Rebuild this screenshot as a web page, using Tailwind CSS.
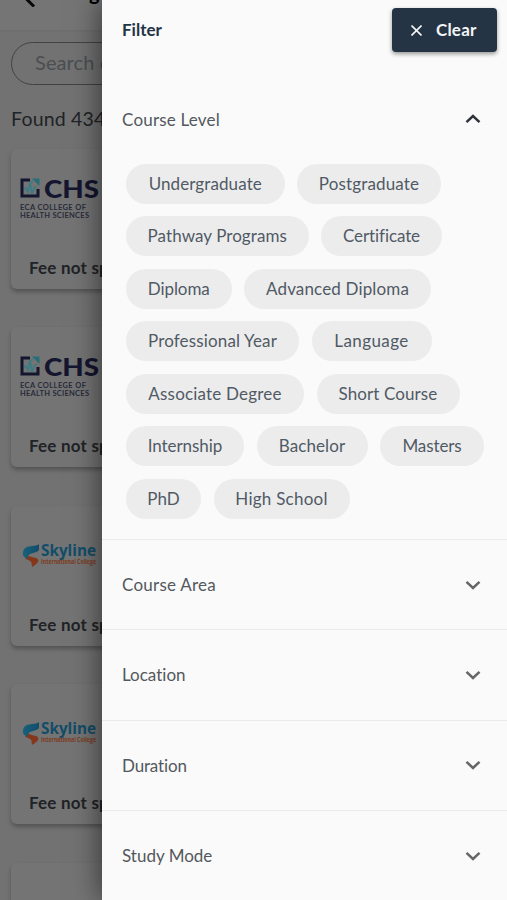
<!DOCTYPE html>
<html lang="en">
<head>
<meta charset="utf-8">
<title>Filter</title>
<script src="https://cdn.jsdelivr.net/npm/@tailwindcss/browser@4"></script>
</head>
<body class="h-[900px] w-[507px] overflow-hidden bg-[#757575] font-['Lato','Noto_Sans',sans-serif] [font-variant-ligatures:none]">
<svg class="absolute h-0 w-0">
  <defs><linearGradient id="sky" x1="0" x2="1"><stop stop-color="#17627b"/><stop offset="1" stop-color="#124c6a"/></linearGradient></defs>
  <symbol id="down" viewBox="0 0 16 10"><path d="M1.500 1.800 8 8l6.500-6.200" fill="none" stroke="currentColor" stroke-width="2.500"/></symbol>
  <symbol id="chs" viewBox="0 0 82 44">
    <path d="M10 2H2v16h16v-7" fill="none" stroke="#14152f" stroke-width="3"/>
    <path d="M12 .5h7.500V8z" fill="#286e78"/>
    <path d="m4 11 2-1 2 4 2-9 2 11 2-6 3-2M9 6l4-3" fill="none" stroke="#357d86" stroke-width="1.500"/>
    <text x="24" y="20" font-family="Lato" font-size="25" font-weight="900" textLength="55" lengthAdjust="spacingAndGlyphs" fill="#14152f">CHS</text>
    <text x="0" y="31.500" font-family="Lato" font-size="7.500" font-weight="700" textLength="66" fill="#292b3b">ECA COLLEGE OF</text>
    <text x="0" y="40" font-family="Lato" font-size="7.500" font-weight="700" textLength="69" fill="#292b3b">HEALTH SCIENCES</text>
  </symbol>
  <symbol id="skyline" viewBox="0 0 76 26">
    <path d="M6 12c2 2.500 7 2 9 3.500 3 2 1 5-5 8.500l-.5-4C10 18 5 17 3 15.500Z" fill="#85371b"/>
    <path d="M17 1v6c-2 3-8 2.500-11 5.500-1 1-.5 2 1 3.500C3 15 0 13 1 9c1-5 5-5.500 9-6 3-.3 5-.5 7-2Z" fill="url(#sky)"/>
    <text x="19" y="13" font-family="Open Sans" font-size="16" font-weight="700" textLength="55" lengthAdjust="spacingAndGlyphs" fill="#124d69">Skyline</text>
    <text x="19" y="21" font-family="Open Sans" font-size="6.500" font-weight="700" textLength="55" lengthAdjust="spacingAndGlyphs" fill="#7c3b20">International College</text>
  </symbol>
</svg>

<div class="relative h-[900px]">
  <main class="h-[900px] w-[102px] overflow-hidden bg-[#727272] text-[#202327]">
    <header class="flex h-[30px] overflow-hidden bg-[#757575] shadow-[0_1px_3px_#0001]">
      <svg class="mt-[-13px] ml-[24px] h-[20px] w-[14px] shrink-0" viewBox="0 0 14 20" fill="none" stroke="#080808" stroke-width="3"><path d="M10 4 2.500 12l7.500 7.500"/></svg>
      <span class="mt-[-20px] ml-[51px] text-[20px] font-bold leading-[24px] text-black">g</span>
    </header>
    <div class="mt-[12px] ml-[11px] flex h-[43px] w-[300px] items-center rounded-full border-[1.500px] border-[#404244] pb-[3px] pl-[23px] text-[20px] tracking-[0.100px] text-[#4b4e50]">Search courses</div>
    <p class="mt-[21px] ml-[11px] h-[25px] whitespace-nowrap text-[19.500px] leading-[25px] tracking-[0.200px]">Found 434 courses</p>
    <div class="mt-[18px] ml-[11px] flex w-[300px] flex-col gap-[38.400px] [&_b]:tracking-[0.200px]">
      <article class="flex h-[140px] shrink-0 flex-col rounded-[6px] bg-[#747474] pt-[29px] pl-[9px] shadow-[0_3px_4px_#0004]"><svg class="h-[44px] w-[82px]"><use href="#chs"/></svg><b class="mt-[36px] ml-[9px] whitespace-nowrap text-[17px] leading-[20px]">Fee not specified</b></article>
      <article class="flex h-[140px] shrink-0 flex-col rounded-[6px] bg-[#747474] pt-[29px] pl-[9px] shadow-[0_3px_4px_#0004]"><svg class="h-[44px] w-[82px]"><use href="#chs"/></svg><b class="mt-[36px] ml-[9px] whitespace-nowrap text-[17px] leading-[20px]">Fee not specified</b></article>
      <article class="flex h-[140px] shrink-0 flex-col rounded-[6px] bg-[#747474] pt-[37px] pl-[11px] shadow-[0_3px_4px_#0004]"><svg class="h-[26px] w-[76px]"><use href="#skyline"/></svg><b class="mt-[46px] ml-[7px] whitespace-nowrap text-[17px] leading-[20px]">Fee not specified</b></article>
      <article class="flex h-[140px] shrink-0 flex-col rounded-[6px] bg-[#747474] pt-[37px] pl-[11px] shadow-[0_3px_4px_#0004]"><svg class="h-[26px] w-[76px]"><use href="#skyline"/></svg><b class="mt-[46px] ml-[7px] whitespace-nowrap text-[17px] leading-[20px]">Fee not specified</b></article>
      <article class="h-[140px] shrink-0 rounded-[6px] bg-[#747474] shadow-[0_3px_4px_#0004]"></article>
    </div>
  </main>

  <aside class="absolute inset-y-0 left-[102px] flex w-[405px] flex-col bg-[#fafafa] text-[17px] text-[#53585d] shadow-[0_0_28px_#0009]">
    <header class="flex h-[61px] shrink-0 items-center justify-between pr-[10px] pl-[20px]">
      <h1 class="mt-[-1px] text-[17px] font-bold text-[#243445]">Filter</h1>
      <button class="mt-[-1px] flex h-[44px] w-[105px] items-center rounded-[4px] bg-[#243445] pl-[19px] text-[17px] font-bold tracking-[0.200px] text-[#f3f5f7] shadow-[0_2px_4px_#0006]">
        <svg class="mr-[14px] h-[11px] w-[11px]" viewBox="0 0 11 11" stroke="currentColor" stroke-width="1.600"><path d="m.5.5 10 10m0-10-10 10"/></svg>Clear
      </button>
    </header>
    <section class="h-[479px] shrink-0 border-b border-[#ebebeb]">
      <div class="flex h-[117px] items-center justify-between pr-[26px] pl-[20px]"><h2 class="tracking-[0.200px]">Course Level</h2><svg class="mt-[-2px] h-[10px] w-[16px] rotate-180 text-[#303439]"><use href="#down"/></svg></div>
      <div class="mt-[-14.500px] flex flex-col gap-[12.500px] pl-[24px] text-[#505a65] [&>div]:flex [&>div]:gap-[12.500px] [&_span]:flex [&_span]:h-[40px] [&_span]:items-center [&_span]:justify-center [&_span]:rounded-full [&_span]:bg-[#ececec] [&_span]:whitespace-nowrap">
        <div><span class="w-[158.500px] tracking-[0.100px]">Undergraduate</span><span class="w-[144px] tracking-[0.150px]">Postgraduate</span></div>
        <div><span class="w-[182.500px] tracking-[0.070px]">Pathway Programs</span><span class="w-[121px] tracking-[-0.100px]">Certificate</span></div>
        <div><span class="w-[105.500px] tracking-[-0.100px]">Diploma</span><span class="w-[187px] tracking-[0.150px]">Advanced Diploma</span></div>
        <div><span class="w-[173px] tracking-[0.150px]">Professional Year</span><span class="w-[120px] tracking-[0.400px]">Language</span></div>
        <div><span class="w-[178px] tracking-[0.200px]">Associate Degree</span><span class="w-[143px] tracking-[0.100px]">Short Course</span></div>
        <div><span class="w-[118px] tracking-[-0.050px]">Internship</span><span class="w-[111px] tracking-[0.100px]">Bachelor</span><span class="w-[104px] tracking-[-0.100px]">Masters</span></div>
        <div><span class="w-[75px] tracking-[0.050px]">PhD</span><span class="w-[136px] tracking-[0.250px]">High School</span></div>
      </div>
    </section>
    <section class="flex h-[90.330px] shrink-0 items-center justify-between border-b border-[#ebebeb] pr-[26px] pl-[20px]"><h2 class="tracking-[0.250px]">Course Area</h2><svg class="h-[10px] w-[16px] text-[#666]"><use href="#down"/></svg></section>
    <section class="flex h-[90.330px] shrink-0 items-center justify-between border-b border-[#ebebeb] pr-[26px] pl-[20px]"><h2>Location</h2><svg class="h-[10px] w-[16px] text-[#666]"><use href="#down"/></svg></section>
    <section class="flex h-[90.330px] shrink-0 items-center justify-between border-b border-[#ebebeb] pr-[26px] pl-[20px]"><h2 class="tracking-[-0.150px]">Duration</h2><svg class="h-[10px] w-[16px] text-[#666]"><use href="#down"/></svg></section>
    <section class="flex h-[90.330px] shrink-0 items-center justify-between pr-[26px] pl-[20px]"><h2>Study Mode</h2><svg class="h-[10px] w-[16px] text-[#666]"><use href="#down"/></svg></section>
  </aside>
</div>
</body>
</html>
